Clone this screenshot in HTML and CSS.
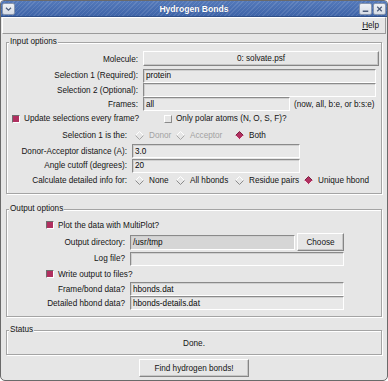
FILE: index.html
```html
<!DOCTYPE html>
<html>
<head>
<meta charset="utf-8">
<link rel="stylesheet" href="styles.css">
</head>
<body>
<div class="window">
  <div class="titlebar">
    <span class="tb-btn">
      <svg width="13" height="12" viewBox="0 0 13 12"><path d="M3.5 4.5 L6.5 7.5 L9.5 4.5" stroke="#4a5a78" stroke-width="1.4" fill="none"/></svg>
    </span>
    <span class="title">Hydrogen Bonds</span>
    <span class="tb-btn">
      <svg width="12" height="12" viewBox="0 0 12 12"><path d="M3 8.5 H9" stroke="#4a5a78" stroke-width="1.6"/></svg>
    </span>
    <span class="tb-btn">
      <svg width="12" height="12" viewBox="0 0 12 12"><path d="M3.5 3.5 L8.5 8.5 M8.5 3.5 L3.5 8.5" stroke="#4a5a78" stroke-width="1.3"/></svg>
    </span>
  </div>
  <div class="menubar"><span class="menu-item"><u>H</u>elp</span></div>

  <div class="group group-input">
    <span class="group-title">Input options</span>
    <div class="row">
      <span class="lbl lbl-a">Molecule:</span>
      <span class="btn btn-molecule">0: solvate.psf</span>
    </div>
    <div class="row">
      <span class="lbl lbl-a">Selection 1 (Required):</span>
      <span class="entry entry-sel">protein</span>
    </div>
    <div class="row">
      <span class="lbl lbl-a">Selection 2 (Optional):</span>
      <span class="entry entry-sel"></span>
    </div>
    <div class="row">
      <span class="lbl lbl-a">Frames:</span>
      <span class="entry entry-frames">all</span>
      <span class="hint">(now, all, b:e, or b:s:e)</span>
    </div>
    <div class="row row-checks">
      <span class="check check-first"><span class="box"></span>Update selections every frame?</span>
      <span class="check"><span class="box off"></span>Only polar atoms (N, O, S, F)?</span>
    </div>
    <div class="row">
      <span class="lbl lbl-c">Selection 1 is the:</span>
      <div class="radios">
        <span class="radio disabled"><svg width="9" height="9" viewBox="0 0 9 9"><path d="M4.5 0.5 L8.5 4.5 L4.5 8.5 L0.5 4.5Z" fill="#e6e6e6"/><path d="M0.5 4.5 L4.5 0.5 L8.5 4.5" stroke="#fff" fill="none"/><path d="M0.5 4.5 L4.5 8.5 L8.5 4.5" stroke="#a8a8a8" fill="none"/></svg>Donor</span>
        <span class="radio disabled"><svg width="9" height="9" viewBox="0 0 9 9"><path d="M4.5 0.5 L8.5 4.5 L4.5 8.5 L0.5 4.5Z" fill="#e6e6e6"/><path d="M0.5 4.5 L4.5 0.5 L8.5 4.5" stroke="#fff" fill="none"/><path d="M0.5 4.5 L4.5 8.5 L8.5 4.5" stroke="#a8a8a8" fill="none"/></svg>Acceptor</span>
        <span class="radio"><svg width="9" height="9" viewBox="0 0 9 9"><path d="M4.5 0.5 L8.5 4.5 L4.5 8.5 L0.5 4.5Z" fill="#b03060"/><path d="M0.5 4.5 L4.5 0.5 L8.5 4.5" stroke="#7a2040" fill="none"/><path d="M0.5 4.5 L4.5 8.5 L8.5 4.5" stroke="#f4dde5" fill="none"/></svg>Both</span>
      </div>
    </div>
    <div class="row">
      <span class="lbl lbl-b">Donor-Acceptor distance (A):</span>
      <span class="entry entry-num">3.0</span>
    </div>
    <div class="row">
      <span class="lbl lbl-b">Angle cutoff (degrees):</span>
      <span class="entry entry-num">20</span>
    </div>
    <div class="row">
      <span class="lbl lbl-c">Calculate detailed info for:</span>
      <div class="radios">
        <span class="radio"><svg width="9" height="9" viewBox="0 0 9 9"><path d="M4.5 0.5 L8.5 4.5 L4.5 8.5 L0.5 4.5Z" fill="#e6e6e6"/><path d="M0.5 4.5 L4.5 0.5 L8.5 4.5" stroke="#fff" fill="none"/><path d="M0.5 4.5 L4.5 8.5 L8.5 4.5" stroke="#8a8a8a" fill="none"/></svg>None</span>
        <span class="radio"><svg width="9" height="9" viewBox="0 0 9 9"><path d="M4.5 0.5 L8.5 4.5 L4.5 8.5 L0.5 4.5Z" fill="#e6e6e6"/><path d="M0.5 4.5 L4.5 0.5 L8.5 4.5" stroke="#fff" fill="none"/><path d="M0.5 4.5 L4.5 8.5 L8.5 4.5" stroke="#8a8a8a" fill="none"/></svg>All hbonds</span>
        <span class="radio"><svg width="9" height="9" viewBox="0 0 9 9"><path d="M4.5 0.5 L8.5 4.5 L4.5 8.5 L0.5 4.5Z" fill="#e6e6e6"/><path d="M0.5 4.5 L4.5 0.5 L8.5 4.5" stroke="#fff" fill="none"/><path d="M0.5 4.5 L4.5 8.5 L8.5 4.5" stroke="#8a8a8a" fill="none"/></svg>Residue pairs</span>
        <span class="radio"><svg width="9" height="9" viewBox="0 0 9 9"><path d="M4.5 0.5 L8.5 4.5 L4.5 8.5 L0.5 4.5Z" fill="#b03060"/><path d="M0.5 4.5 L4.5 0.5 L8.5 4.5" stroke="#7a2040" fill="none"/><path d="M0.5 4.5 L4.5 8.5 L8.5 4.5" stroke="#f4dde5" fill="none"/></svg>Unique hbond</span>
      </div>
    </div>
  </div>

  <div class="group group-output">
    <span class="group-title">Output options</span>
    <div class="row row-indent">
      <span class="check"><span class="box"></span>Plot the data with MultiPlot?</span>
    </div>
    <div class="row">
      <span class="lbl lbl-o">Output directory:</span>
      <span class="entry entry-dir">/usr/tmp</span>
      <span class="btn btn-choose">Choose</span>
    </div>
    <div class="row">
      <span class="lbl lbl-o">Log file?</span>
      <span class="entry entry-out"></span>
    </div>
    <div class="row row-indent">
      <span class="check"><span class="box"></span>Write output to files?</span>
    </div>
    <div class="row">
      <span class="lbl lbl-o">Frame/bond data?</span>
      <span class="entry entry-out">hbonds.dat</span>
    </div>
    <div class="row">
      <span class="lbl lbl-o">Detailed hbond data?</span>
      <span class="entry entry-out">hbonds-details.dat</span>
    </div>
  </div>

  <div class="group group-status">
    <span class="group-title">Status</span>
    <span class="status-text">Done.</span>
  </div>

  <span class="btn btn-find">Find hydrogen bonds!</span>
</div>
</body>
</html>
```

FILE: styles.css
```css
* { box-sizing: border-box; }
html, body { margin: 0; padding: 0; }
body {
  width: 388px;
  height: 381px;
  background: #ffffff;
  font-family: "Liberation Sans", Arial, sans-serif;
  font-size: 8.2px;
  color: #141414;
  overflow: hidden;
}
.window {
  width: 388px;
  height: 381px;
  border: 1px solid #6a6a6a;
  border-radius: 4px 4px 5px 5px;
  background: #e6e6e6;
  overflow: hidden;
  display: flex;
  flex-direction: column;
}
.titlebar {
  flex: none;
  height: 16px;
  display: flex;
  align-items: center;
  gap: 1px;
  padding: 0 1px 0 1px;
  background:
    repeating-linear-gradient(135deg, rgba(255,255,255,0.10) 0 1px, rgba(255,255,255,0) 1px 3px),
    linear-gradient(#5479ba, #3e64a8);
  border-bottom: 1px solid #2f4f88;
}
.tb-btn {
  flex: none;
  width: 13px;
  height: 12px;
  display: flex;
  align-items: center;
  justify-content: center;
  background: linear-gradient(#eef1f6, #d6dce6);
  border: 1px solid #8795ad;
  border-radius: 2px;
}
.tb-btn svg { display: block; }
.title {
  flex: 1;
  text-align: center;
  color: #ffffff;
  font-weight: bold;
  font-size: 8.6px;
  padding-left: 14px;
  text-shadow: 0 0 1px rgba(0,0,40,0.4);
}
.menubar {
  flex: none;
  height: 17px;
  margin: 0 1px;
  border: 1px solid;
  border-color: #ffffff #9a9a9a #9a9a9a #ffffff;
  display: flex;
  justify-content: flex-end;
  align-items: center;
  padding-right: 6px;
}
.menu-item u { text-decoration: underline; }

.group {
  position: relative;
  flex: none;
  margin: 0 5px;
  border: 1px solid #a4a4a4;
  box-shadow: inset 1px 1px 0 #ffffff, 1px 1px 0 #ffffff;
}
.group-title {
  position: absolute;
  left: 2px;
  top: -6px;
  padding: 0 1px;
  line-height: 10px;
  background: #e6e6e6;
}
.group-input {
  margin-top: 8px;
  padding: 8px 0 5px 0;
  display: grid;
  grid-template-rows: 17px 15px 14px 14px 15px 18px 14px 15px 15px;
}
.group-output {
  margin-top: 15px;
  padding: 7px 0 6px 0;
  display: grid;
  grid-template-rows: 16px 18px 15px 16px 14px 14px;
}
.group-status {
  margin-top: 13px;
  height: 25px;
  display: flex;
  align-items: center;
  justify-content: center;
}
.status-text { padding-top: 1px; }

.row {
  display: flex;
  align-items: center;
  white-space: nowrap;
}
.lbl { flex: none; text-align: right; }
.lbl-a { width: 131px; margin-right: 5px; }
.lbl-b { width: 120px; margin-right: 5px; }
.lbl-c { width: 120px; margin-right: 8px; }
.lbl-o { width: 118px; margin-right: 5px; }

.btn {
  flex: none;
  display: flex;
  align-items: center;
  justify-content: center;
  background: #e6e6e6;
  border: 1px solid;
  border-color: #ffffff #858585 #858585 #ffffff;
  box-shadow: inset -1px -1px 0 #c6c6c6;
  white-space: nowrap;
}
.btn-molecule { width: 236px; height: 15px; align-self: flex-start; }
.btn-choose { width: 47px; height: 18px; margin-left: 2px; }
.btn-find {
  width: 110px;
  height: 18px;
  margin: 4px auto 0 auto;
}

.entry {
  flex: none;
  height: 14px;
  display: flex;
  align-items: center;
  padding-left: 2px;
  background: #e8e8e8;
  border: 1px solid;
  border-color: #8a8a8a #ffffff #ffffff #8a8a8a;
  box-shadow: inset 1px 1px 0 #cfcfcf;
  color: #0a0a0a;
}
.entry-sel { width: 233px; }
.entry-frames { width: 147px; }
.entry-num { width: 168px; }
.entry-dir { width: 165px; height: 15px; background: #d6d6d6; }
.entry-out { width: 214px; }
.hint { margin-left: 4px; }

.row-checks { padding-left: 5px; }
.row-indent { padding-left: 39px; }
.check {
  display: flex;
  align-items: center;
  gap: 4px;
}
.check-first { width: 152px; flex: none; }
.box {
  flex: none;
  width: 8px;
  height: 8px;
  border: 1px solid;
  border-color: #6e6e6e #ffffff #ffffff #6e6e6e;
  background: #b03060;
}
.box.off {
  border-color: #ffffff #8a8a8a #8a8a8a #ffffff;
  background: #e6e6e6;
}

.radios {
  display: grid;
  grid-template-columns: 41px 59px 69px auto;
  align-items: center;
}
.radio {
  display: flex;
  align-items: center;
  gap: 5px;
}
.radio svg { display: block; flex: none; }
.radio.disabled { color: #a2a2a2; }
```
